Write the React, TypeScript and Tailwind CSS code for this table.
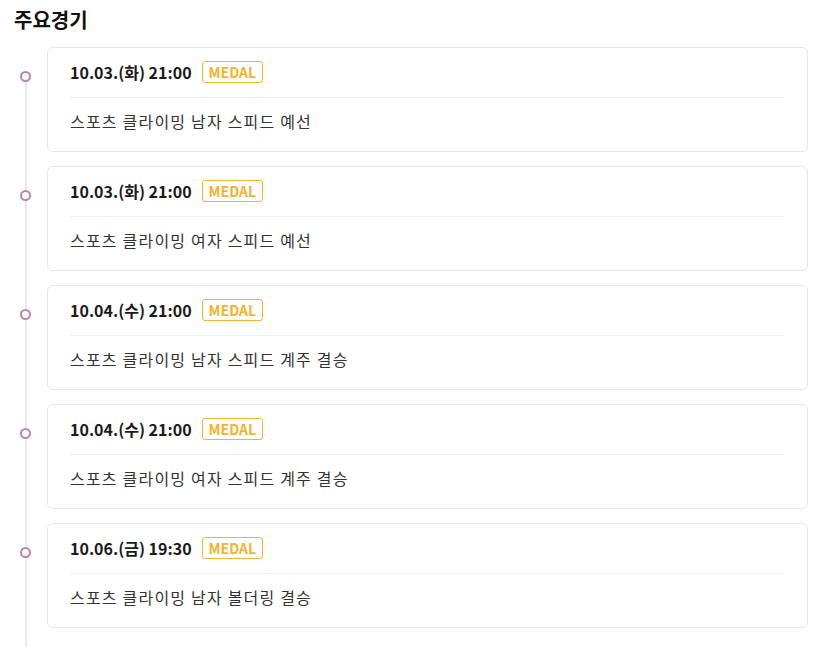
import React from 'react';

type Match = {
  date: string;
  title: string;
};

const matches: Match[] = [
  { date: '10.03.(화) 21:00', title: '스포츠 클라이밍 남자 스피드 예선' },
  { date: '10.03.(화) 21:00', title: '스포츠 클라이밍 여자 스피드 예선' },
  { date: '10.04.(수) 21:00', title: '스포츠 클라이밍 남자 스피드 계주 결승' },
  { date: '10.04.(수) 21:00', title: '스포츠 클라이밍 여자 스피드 계주 결승' },
  { date: '10.06.(금) 19:30', title: '스포츠 클라이밍 남자 볼더링 결승' },
];

function MatchCard({ match }: { match: Match }) {
  return (
    <div className="flex">
      <div className="w-[47px] shrink-0 flex justify-start pl-[20px] pt-[24px]">
        <span className="relative z-10 block w-[11px] h-[11px] rounded-full border-2 border-[#bd84ac] bg-white" />
      </div>
      <div className="flex-1 h-[105px] rounded-[6px] border border-[#e6e6ea] bg-white px-[22px] pt-[13px]">
        <div className="flex items-center h-[22px] gap-[10px]">
          <span className="text-[16px] font-bold text-[#1a1a1a] leading-none">{match.date}</span>
          <span className="h-[22px] px-[6px] flex items-center rounded-[3px] border border-[#f6b12f] text-[14px] font-bold text-[#f6b12f] leading-none">
            MEDAL
          </span>
        </div>
        <div className="mt-[14px] h-px bg-[#efeff2]" />
        <p className="mt-[11px] text-[16px] leading-[24px] tracking-[1.2px] text-[#333]">{match.title}</p>
      </div>
    </div>
  );
}

export default function App() {
  return (
    <div
      className="min-h-screen bg-white pl-[14px] pr-[15px] pt-[6px] pb-[30px]"
      style={{ fontFamily: '"Noto Sans CJK KR", "Noto Sans", sans-serif' }}
    >
      <h2 className="text-[20px] font-bold leading-[28px] text-[#111] mb-[13px]">주요경기</h2>
      <div className="relative -ml-[14px]">
        <div className="absolute left-[25px] top-[34px] -bottom-[40px] w-[2px] bg-[#e8e8ee]" />
        <div className="flex flex-col gap-[14px]">
          {matches.map((m, i) => (
            <MatchCard key={i} match={m} />
          ))}
        </div>
      </div>
    </div>
  );
}
